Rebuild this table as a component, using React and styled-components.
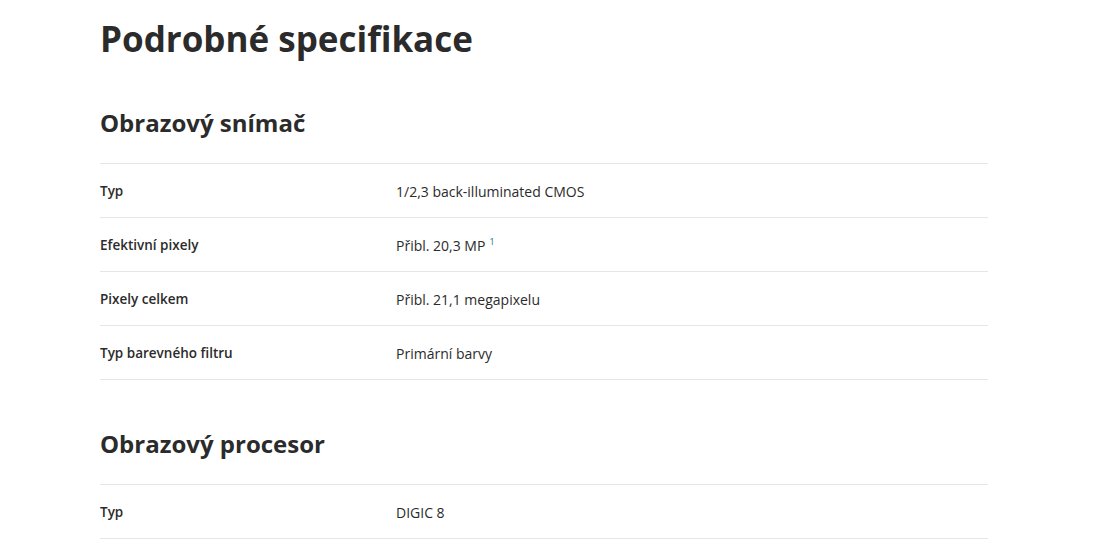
import styled, { createGlobalStyle } from 'styled-components';

const GlobalStyle = createGlobalStyle`
  body {
    margin: 0;
    background: #fff;
    font-family: "Open Sans", "Liberation Sans", sans-serif;
    color: #2b2b2b;
  }
`;

const Page = styled.div`
  width: 888px;
  padding: 17px 0 0 100px;
`;

const Title = styled.h1`
  margin: 0;
  font-size: 35px;
  line-height: 44px;
  font-weight: 700;
  color: #2b2b2b;
`;

const Section = styled.section`
  margin-top: ${props => (props.first ? '46px' : '48px')};
`;

const SectionTitle = styled.h2`
  margin: 0 0 24px;
  font-size: 24px;
  line-height: 32px;
  font-weight: 700;
  color: #2b2b2b;
`;

const SpecTable = styled.div`
  border-top: 1px solid #e6e6e6;
`;

const SpecRow = styled.div`
  display: grid;
  grid-template-columns: 296px 1fr;
  align-items: center;
  box-sizing: border-box;
  height: 54px;
  padding-top: 1px;
  border-bottom: 1px solid #e6e6e6;
`;

const Label = styled.div`
  font-size: 13.5px;
  font-weight: 600;
  color: #2b2b2b;
`;

const Value = styled.div`
  font-size: 14px;
  color: #2b2b2b;
`;

const Note = styled.sup`
  font-size: 9px;
  color: #1f6b8f;
  margin-left: 4px;
  vertical-align: 6px;
`;

const sections = [
  {
    title: 'Obrazový snímač',
    rows: [
      ['Typ', '1/2,3 back-illuminated CMOS'],
      ['Efektivní pixely', 'Přibl. 20,3 MP', '1'],
      ['Pixely celkem', 'Přibl. 21,1 megapixelu'],
      ['Typ barevného filtru', 'Primární barvy'],
    ],
  },
  {
    title: 'Obrazový procesor',
    rows: [['Typ', 'DIGIC 8']],
  },
];

const App = () => (
  <>
    <GlobalStyle />
    <Page>
      <Title>Podrobné specifikace</Title>
      {sections.map((section, i) => (
        <Section key={section.title} first={i === 0}>
          <SectionTitle>{section.title}</SectionTitle>
          <SpecTable>
            {section.rows.map(([label, value, note]) => (
              <SpecRow key={label}>
                <Label>{label}</Label>
                <Value>
                  {value}
                  {note && <Note>{note}</Note>}
                </Value>
              </SpecRow>
            ))}
          </SpecTable>
        </Section>
      ))}
    </Page>
  </>
);

export default App;
